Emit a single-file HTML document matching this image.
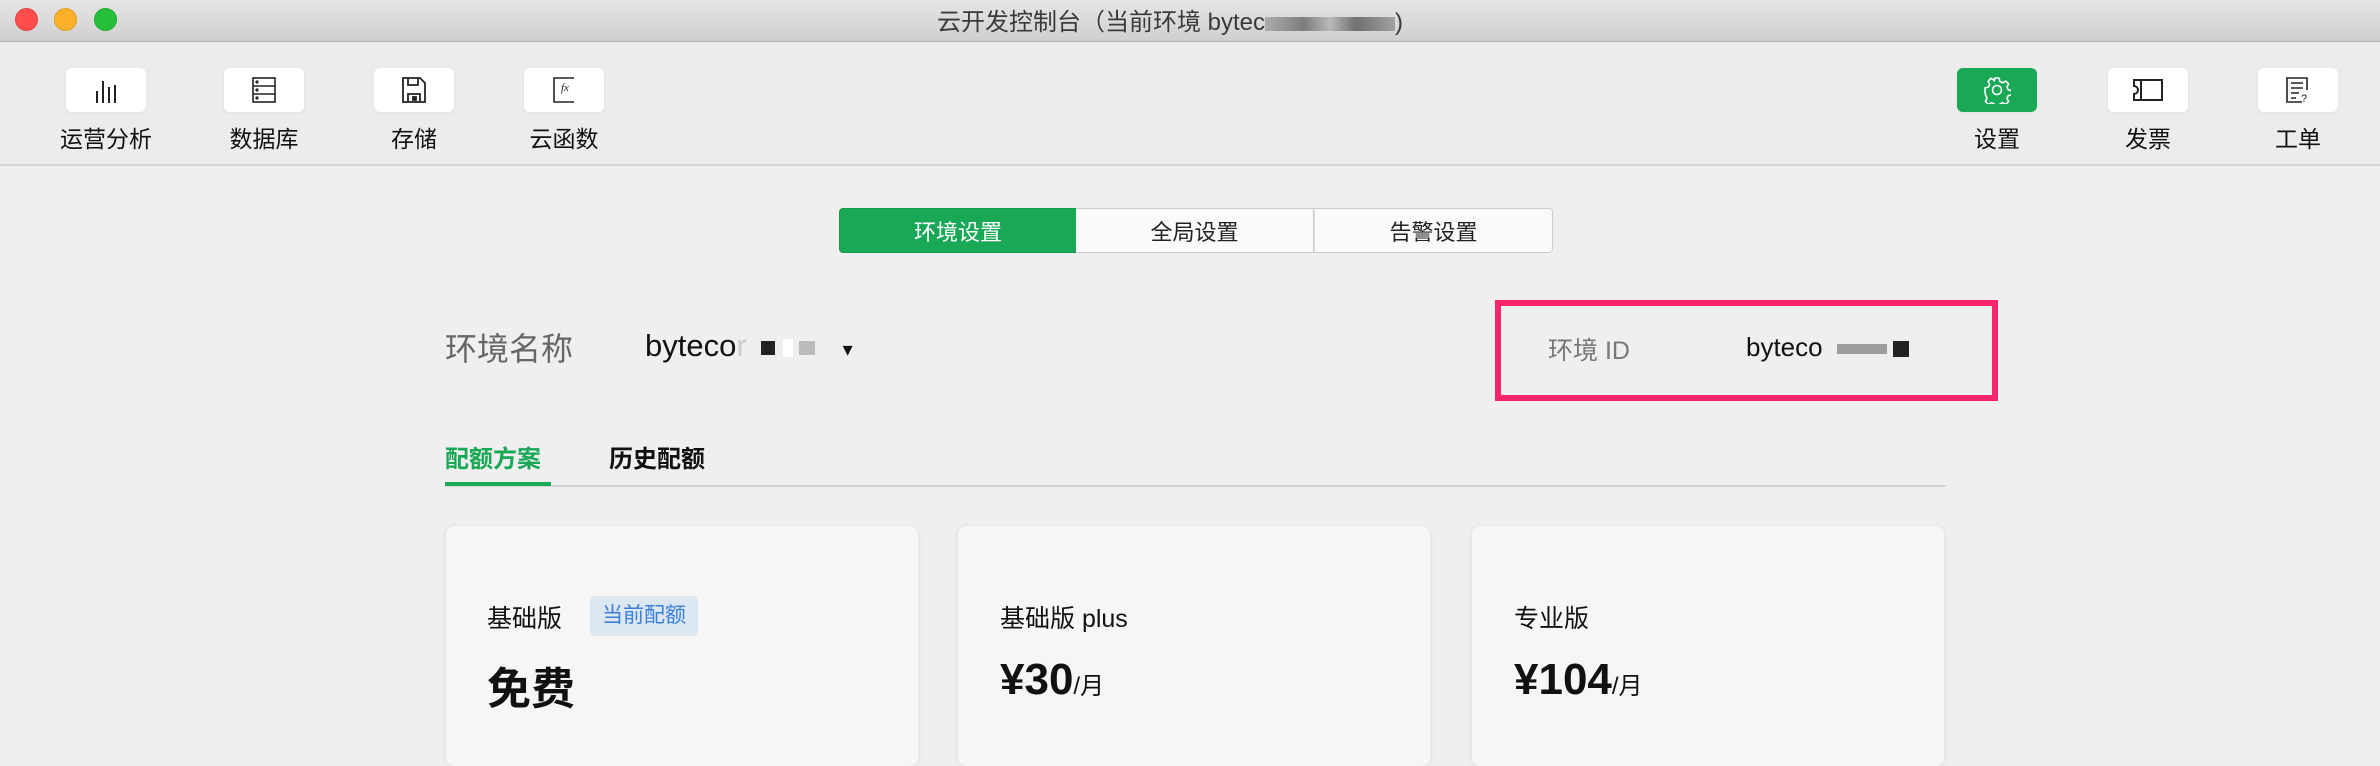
<!DOCTYPE html>
<html><head><meta charset="utf-8"><style>
*{margin:0;padding:0;box-sizing:border-box}
body{width:2380px;height:740px;overflow:hidden;background:#efefef;font-family:"Liberation Sans","Noto Sans CJK SC",sans-serif;position:relative;color:#111}
.abs{position:absolute}
.title{left:0;top:0;width:2380px;height:42px;background:linear-gradient(#e6e6e6,#cfcfcf);border-bottom:1px solid #b5b5b5}
.dot{width:23px;height:23px;border-radius:50%;top:8px}
.ttl{left:937px;top:2px;font-size:24px;color:#3a3a3a;white-space:nowrap}
.toolbar{left:0;top:42px;width:2380px;height:124px;background:#ececec;border-bottom:2px solid #d2d2d2}
.btn{top:68px;width:80px;height:44px;background:#fff;border-radius:6px;box-shadow:0 1px 3px rgba(0,0,0,.06);display:flex;align-items:center;justify-content:center}
.lbl{top:120px;font-size:23px;width:140px;text-align:center;color:#111}
.seg{top:208px;height:45px;width:238px;background:#fafafa;border:1px solid #ccc;font-size:22px;display:flex;align-items:center;justify-content:center;color:#222}
.card{top:526px;width:472px;height:240px;background:#f6f6f6;border-radius:8px;box-shadow:0 1px 6px rgba(0,0,0,.08)}
.blk{display:inline-block;background:#222;vertical-align:middle}
</style></head><body>
<div class="abs title"></div>
<div class="abs dot" style="left:15px;background:#fe4d4c;border:1px solid #e0403f"></div>
<div class="abs dot" style="left:54px;background:#fdb12a;border:1px solid #e09c22"></div>
<div class="abs dot" style="left:94px;background:#27c03a;border:1px solid #1faa31"></div>
<div class="abs ttl">云开发控制台（当前环境 bytec<span style="display:inline-block;width:130px;height:14px;background:linear-gradient(90deg,#999,#555 30%,#aaa 50%,#444 70%,#888);vertical-align:middle;opacity:.7"></span>)</div>
<div class="abs toolbar"></div>

<div class="abs btn" style="left:66px"><svg width="24" height="26" viewBox="0 0 24 26" fill="none" stroke="#222" stroke-width="2"><path d="M3 26V14M9 26V4M15 26V10M21 26V8"/></svg></div>
<div class="abs btn" style="left:224px"><svg width="24" height="26" viewBox="0 0 24 26" fill="none" stroke="#222" stroke-width="1.6"><rect x="1" y="1" width="22" height="24"/><path d="M1 9h22M1 17h22"/><circle cx="5" cy="5" r=".8" fill="#222"/><circle cx="5" cy="13" r=".8" fill="#222"/><circle cx="5" cy="21" r=".8" fill="#222"/></svg></div>
<div class="abs btn" style="left:374px"><svg width="24" height="26" viewBox="0 0 24 26" fill="none" stroke="#222" stroke-width="1.8"><path d="M1 1h17l5 5v19H1z"/><path d="M6 1v7h10V1M6 25v-8h12v8"/><rect x="11" y="20" width="3" height="3" fill="#222"/></svg></div>
<div class="abs btn" style="left:524px"><svg width="24" height="26" viewBox="0 0 24 26" fill="none" stroke="#222" stroke-width="1.6"><path d="M22 1H2v24h20"/><text x="9" y="14" font-size="11" font-style="italic" fill="#222" stroke="none" font-family="Liberation Serif">fx</text></svg></div>
<div class="abs lbl" style="left:36px">运营分析</div>
<div class="abs lbl" style="left:194px">数据库</div>
<div class="abs lbl" style="left:344px">存储</div>
<div class="abs lbl" style="left:494px">云函数</div>

<div class="abs btn" style="left:1957px;background:#19a856"><svg width="28" height="28" viewBox="0 0 28 28" fill="none" stroke="#fff" stroke-width="1.6"><path d="M12 2h4l1 3.5 2.5 1.2 3.3-1.6 2.8 2.8-1.6 3.3 1.2 2.5 3.5 1v4l-3.5 1-1.2 2.5 1.6 3.3-2.8 2.8-3.3-1.6-2.5 1.2-1 3.5h-4l-1-3.5-2.5-1.2-3.3 1.6-2.8-2.8 1.6-3.3-1.2-2.5L2 16v-4l3.5-1 1.2-2.5-1.6-3.3 2.8-2.8 3.3 1.6L11 5.5z"/><circle cx="14" cy="14" r="4.5"/></svg></div>
<div class="abs btn" style="left:2108px"><svg width="30" height="22" viewBox="0 0 30 22" fill="none" stroke="#222" stroke-width="2"><path d="M1 1h28v20H1v-6a4 4 0 0 0 0-8z"/><path d="M8 1v20"/></svg></div>
<div class="abs btn" style="left:2258px"><svg width="24" height="26" viewBox="0 0 24 26" fill="none" stroke="#222" stroke-width="1.6"><path d="M16 25H1V1h20v12"/><path d="M5 6h12M5 11h12M5 16h8M5 21h5"/><text x="15" y="25" font-size="11" fill="#222" stroke="none">?</text></svg></div>
<div class="abs lbl" style="left:1927px">设置</div>
<div class="abs lbl" style="left:2078px">发票</div>
<div class="abs lbl" style="left:2228px">工单</div>

<div class="abs seg" style="left:839px;background:#19a856;border-color:#17994e;color:#fff;border-radius:4px 0 0 4px">环境设置</div>
<div class="abs seg" style="left:1076px;border-left:none">全局设置</div>
<div class="abs seg" style="left:1314px;border-left:1px solid #ddd;width:239px;border-radius:0 4px 4px 0">告警设置</div>

<div class="abs" style="left:445px;top:324px;font-size:32px;color:#666">环境名称</div>
<div class="abs" style="left:645px;top:328px;font-size:31px;color:#111;white-space:nowrap">byteco<span style="color:#ccc">r</span><span class="blk" style="width:14px;height:14px;margin-left:14px"></span><span class="blk" style="width:10px;height:18px;background:#fff;margin-left:8px"></span><span class="blk" style="width:16px;height:14px;background:#bbb;margin-left:6px"></span><span style="font-size:20px;margin-left:28px">▾</span></div>

<div class="abs" style="left:1495px;top:300px;width:503px;height:101px;border:6px solid #f7256b"></div>
<div class="abs" style="left:1548px;top:331px;font-size:25px;color:#777">环境 ID</div>
<div class="abs" style="left:1746px;top:332px;font-size:26px;color:#111;white-space:nowrap">byteco<span class="blk" style="width:50px;height:10px;margin-left:14px;background:#666;opacity:.6"></span><span class="blk" style="width:16px;height:16px;margin-left:6px"></span></div>

<div class="abs" style="left:445px;top:439px;font-size:24px;color:#19a856;font-weight:bold">配额方案</div>
<div class="abs" style="left:609px;top:439px;font-size:24px;color:#111;font-weight:bold">历史配额</div>
<div class="abs" style="left:445px;top:485px;width:1501px;height:2px;background:#d4d4d4"></div>
<div class="abs" style="left:445px;top:482px;width:106px;height:4px;background:#19a856"></div>

<div class="abs card" style="left:446px"></div>
<div class="abs card" style="left:958px"></div>
<div class="abs card" style="left:1472px"></div>
<div class="abs" style="left:487px;top:599px;font-size:25px">基础版</div>
<div class="abs" style="left:590px;top:596px;width:108px;height:40px;background:#dce7f1;border-radius:3px;color:#3a7fdc;font-size:21px;text-align:center;line-height:40px">当前配额</div>
<div class="abs" style="left:487px;top:653px;font-size:44px;font-weight:bold">免费</div>
<div class="abs" style="left:1000px;top:599px;font-size:25px">基础版 plus</div>
<div class="abs" style="left:1000px;top:655px;font-size:44px;font-weight:bold">¥30<span style="font-size:24px;font-weight:normal">/月</span></div>
<div class="abs" style="left:1514px;top:599px;font-size:25px">专业版</div>
<div class="abs" style="left:1514px;top:655px;font-size:44px;font-weight:bold">¥104<span style="font-size:24px;font-weight:normal">/月</span></div>
</body></html>
